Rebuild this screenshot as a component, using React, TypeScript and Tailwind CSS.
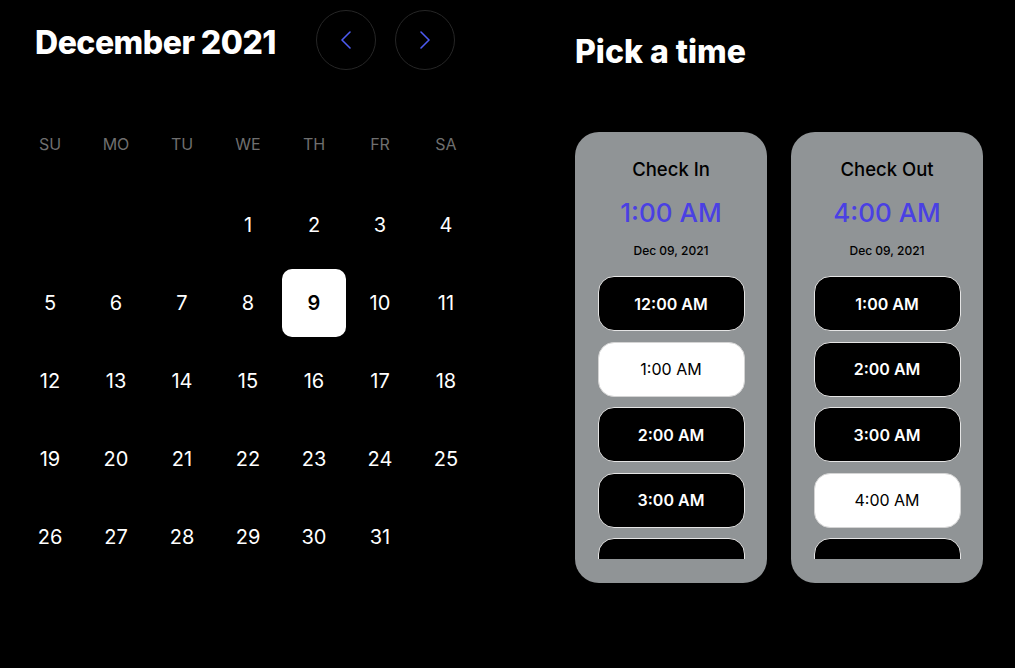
import { useState } from 'react'

const WEEKDAYS = ['SU', 'MO', 'TU', 'WE', 'TH', 'FR', 'SA']

function Chevron({ dir }: { dir: 'left' | 'right' }) {
  return (
    <svg width="12" height="18" viewBox="0 0 12 18" fill="none">
      {dir === 'left' ? (
        <polyline points="10,1 2,9 10,17" stroke="#4d5bf2" strokeWidth="1.6" strokeLinecap="round" strokeLinejoin="round" />
      ) : (
        <polyline points="2,1 10,9 2,17" stroke="#4d5bf2" strokeWidth="1.6" strokeLinecap="round" strokeLinejoin="round" />
      )}
    </svg>
  )
}

function TimeCard({ title, value, date, times, selected }: { title: string; value: string; date: string; times: string[]; selected: string }) {
  return (
    <div className="w-[192px] h-[451px] rounded-[24px] bg-[#909496] pt-[25px] flex flex-col items-center">
      <div className="text-[18.5px] leading-[24px] font-medium text-black">{title}</div>
      <div className="mt-[16px] text-[26px] leading-[32px] font-medium text-[#4a40e3]">{value}</div>
      <div className="mt-[14px] text-[12px] leading-[16px] font-medium text-black">{date}</div>
      <div className="mt-[17px] h-[283px] overflow-hidden flex flex-col gap-[10.5px]">
        {times.map((t) => (
          <button
            key={t}
            className={
              t === selected
                ? 'w-[147px] h-[55px] shrink-0 rounded-[16px] border border-[#d4d4d4] bg-white text-black text-[16px] font-normal'
                : 'w-[147px] h-[55px] shrink-0 rounded-[16px] border border-[#e5e5e5] bg-black text-white text-[16px] font-semibold'
            }
          >
            {t}
          </button>
        ))}
      </div>
    </div>
  )
}

export default function App() {
  const [day, setDay] = useState(9)
  const cells: (number | null)[] = [null, null, null, ...Array.from({ length: 31 }, (_, i) => i + 1)]

  return (
    <div className="w-[1015px] h-[668px] bg-black flex text-white" style={{ fontFamily: 'Inter, "Open Sans", sans-serif' }}>
      {/* Calendar */}
      <div className="w-[462px] ml-[17px] pt-[10px] shrink-0">
        <div className="flex items-center h-[60px]">
          <h1 className="w-[299px] pl-[18px] pt-[6px] text-[32px] font-extrabold tracking-[-0.5px]">December 2021</h1>
          <div className="flex gap-[19px]">
            <button className="w-[60px] h-[60px] rounded-full border border-[#262626] flex items-center justify-center">
              <Chevron dir="left" />
            </button>
            <button className="w-[60px] h-[60px] rounded-full border border-[#262626] flex items-center justify-center">
              <Chevron dir="right" />
            </button>
          </div>
        </div>

        <div className="mt-[54px] grid grid-cols-7 h-[40px] items-center">
          {WEEKDAYS.map((d) => (
            <div key={d} className="text-center text-[16px] text-[#6f6f6f]">{d}</div>
          ))}
        </div>

        <div className="mt-[22px] grid grid-cols-7">
          {cells.map((c, i) => (
            <div key={i} className="h-[78px] flex items-center justify-center">
              {c !== null &&
                (c === day ? (
                  <button className="w-[64px] h-[68px] rounded-[10px] bg-white text-black text-[20px] font-semibold">{c}</button>
                ) : (
                  <button onClick={() => setDay(c)} className="text-[20px] text-white">{c}</button>
                ))}
            </div>
          ))}
        </div>
      </div>

      {/* Time picker */}
      <div className="ml-[96px] pt-[34px]">
        <h2 className="h-[36px] leading-[36px] text-[32px] font-extrabold">Pick a time</h2>
        <div className="mt-[62px] flex gap-[24px]">
          <TimeCard
            title="Check In"
            value="1:00 AM"
            date="Dec 09, 2021"
            times={['12:00 AM', '1:00 AM', '2:00 AM', '3:00 AM', '4:00 AM']}
            selected="1:00 AM"
          />
          <TimeCard
            title="Check Out"
            value="4:00 AM"
            date="Dec 09, 2021"
            times={['1:00 AM', '2:00 AM', '3:00 AM', '4:00 AM', '5:00 AM']}
            selected="4:00 AM"
          />
        </div>
      </div>
    </div>
  )
}
